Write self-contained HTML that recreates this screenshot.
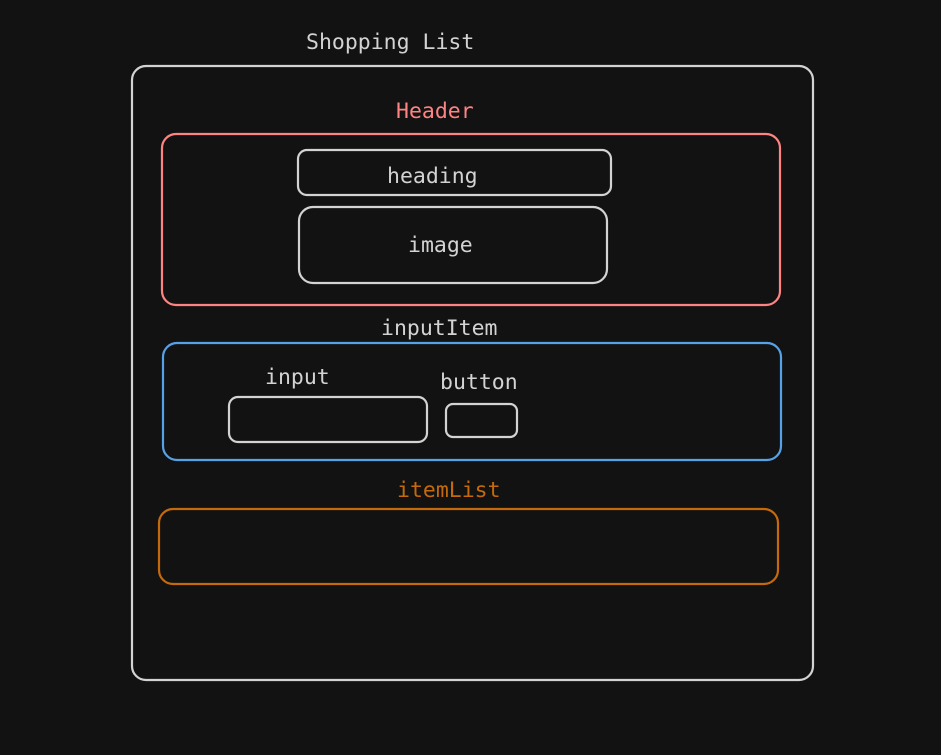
<!DOCTYPE html>
<html><head><style>
html,body{margin:0;padding:0;background:#121212;}
svg{display:block}
text{font-family:"DejaVu Sans Mono","Liberation Mono",monospace;font-size:21.5px;}
</style></head><body>
<svg width="941" height="755" viewBox="0 0 941 755" xmlns="http://www.w3.org/2000/svg">
<rect width="941" height="755" fill="#121212"/>
<g fill="none" stroke-width="2.2">
<rect x="132" y="66" width="681" height="614" rx="14" stroke="#d3d3d3"/>
<rect x="162" y="134" width="618" height="171" rx="14" stroke="#ff8383"/>
<rect x="298" y="150" width="313" height="45" rx="9" stroke="#d3d3d3"/>
<rect x="299" y="207" width="308" height="76" rx="14" stroke="#d3d3d3"/>
<rect x="163" y="343" width="618" height="117" rx="14" stroke="#56a2e8"/>
<rect x="229" y="397" width="198" height="45" rx="9" stroke="#d3d3d3"/>
<rect x="446" y="404" width="71" height="33" rx="7" stroke="#d3d3d3"/>
<rect x="159" y="509" width="619" height="75" rx="14" stroke="#c46a0c"/>
</g>
<g fill="#d3d3d3">
<text x="306" y="49">Shopping List</text>
<text x="387" y="183">heading</text>
<text x="408" y="252">image</text>
<text x="381" y="335">inputItem</text>
<text x="265" y="384">input</text>
<text x="440" y="389">button</text>
</g>
<text x="396" y="118" fill="#ff8383">Header</text>
<text x="397" y="497" fill="#c46a0c">itemList</text>
</svg>
</body></html>
